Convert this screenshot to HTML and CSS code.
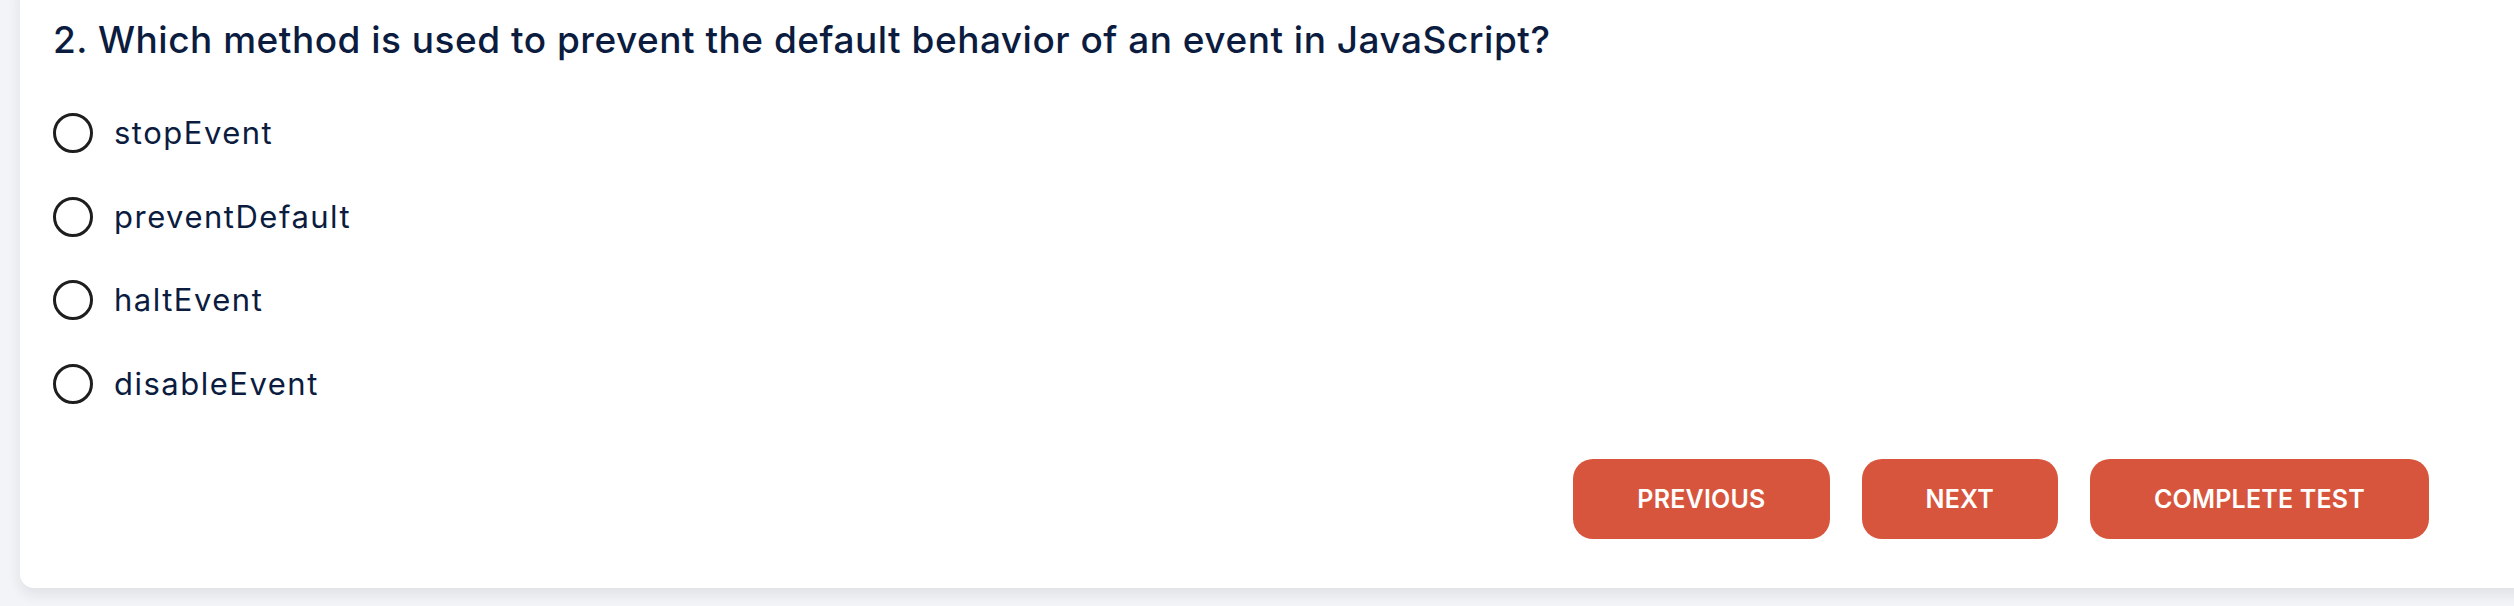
FILE: index.html
```html
<!DOCTYPE html>
<html lang="en">
<head>
<meta charset="utf-8">
<title>Quiz</title>
<link rel="stylesheet" href="styles.css">
</head>
<body>
<main class="card">
  <h2 class="question">2. Which method is used to prevent the default behavior of an event in JavaScript?</h2>
  <ul class="options">
    <li class="option"><span class="radio"></span><span class="label">stopEvent</span></li>
    <li class="option"><span class="radio"></span><span class="label">preventDefault</span></li>
    <li class="option"><span class="radio"></span><span class="label">haltEvent</span></li>
    <li class="option"><span class="radio"></span><span class="label">disableEvent</span></li>
  </ul>
  <div class="actions">
    <button class="btn">PREVIOUS</button>
    <button class="btn">NEXT</button>
    <button class="btn">COMPLETE TEST</button>
  </div>
</main>
</body>
</html>
```

FILE: styles.css
```css
html, body {
  margin: 0;
  padding: 0;
}
body {
  background: #f3f4f7;
  overflow: hidden;
  height: 606px;
  font-family: Inter, "Open Sans", sans-serif;
}
.card {
  margin: -20px -40px 0 20px;
  padding: 33px 125px 49px 33px;
  background: #ffffff;
  border-radius: 14px;
  box-shadow: 0 6px 14px rgba(20, 28, 50, 0.09);
}
.question {
  margin: 0;
  font-size: 37px;
  line-height: 54px;
  font-weight: 500;
  letter-spacing: 0.5px;
  color: #0b1c3f;
}
.options {
  list-style: none;
  margin: 46px 0 0 0;
  padding: 0;
  display: flex;
  flex-direction: column;
  gap: 43.5px;
}
.option {
  display: flex;
  align-items: center;
  height: 40px;
  gap: 21px;
}
.radio {
  box-sizing: border-box;
  width: 40px;
  height: 40px;
  border: 3.5px solid #1e1e1e;
  border-radius: 50%;
  flex: none;
}
.label {
  font-size: 31px;
  font-weight: 400;
  letter-spacing: 1.5px;
  color: #0b1c3f;
  line-height: 40px;
}
.actions {
  margin-top: 55.5px;
  display: flex;
  justify-content: flex-end;
  gap: 32px;
}
.btn {
  height: 80px;
  padding: 0 64px;
  border: none;
  border-radius: 20px;
  background: #d8553d;
  color: #ffffff;
  font-family: Inter, "Open Sans", sans-serif;
  font-size: 25px;
  font-weight: 600;
  letter-spacing: 0.2px;
}
```
